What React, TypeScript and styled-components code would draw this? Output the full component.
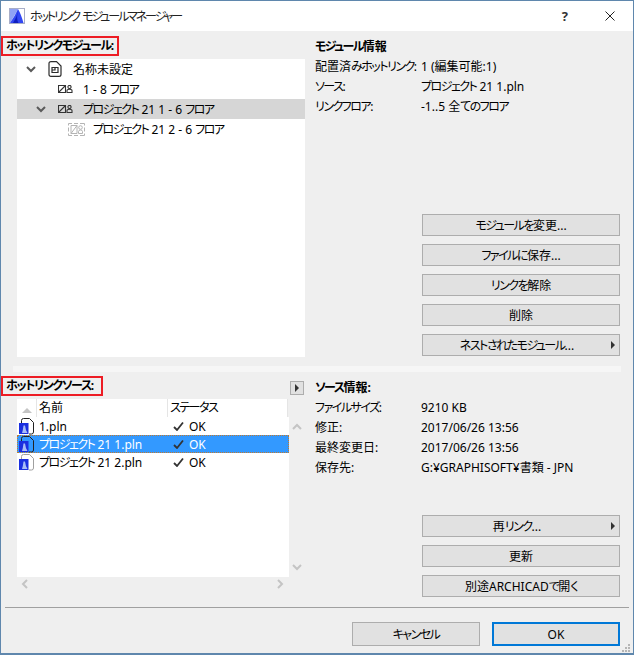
import { Fragment } from 'react'
import styled, { createGlobalStyle } from 'styled-components'

const GlobalStyle = createGlobalStyle`
  html, body {
    margin: 0;
    padding: 0;
    background: #efefef;
  }
  * {
    box-sizing: border-box;
  }
`

const FONT = `"Noto Sans", "Noto Sans CJK JP", sans-serif`

const modules = [
  { name: '名称未設定', level: 0, open: true, icon: 'doc', current: false },
  { name: '1 - 8 フロア', level: 1, open: false, icon: 'module', current: false },
  { name: 'プロジェクト 21 1 - 6 フロア', level: 1, open: true, icon: 'module', current: true },
  { name: 'プロジェクト 21 2 - 6 フロア', level: 2, open: false, icon: 'ghost', current: false },
]

const moduleInfo = [
  { label: '配置済みホットリンク:', value: '1 (編集可能:1)' },
  { label: 'ソース:', value: 'プロジェクト 21 1.pln' },
  { label: 'リンクフロア:', value: '-1..5 全てのフロア' },
]

const sourceInfo = [
  { label: 'ファイルサイズ:', value: '9210 KB' },
  { label: '修正:', value: '2017/06/26 13:56' },
  { label: '最終変更日:', value: '2017/06/26 13:56' },
  { label: '保存先:', value: 'G:¥GRAPHISOFT¥書類 - JPN' },
]

const files = [
  { name: '1.pln', selected: false, faded: false },
  { name: 'プロジェクト 21 1.pln', selected: true, faded: false },
  { name: 'プロジェクト 21 2.pln', selected: false, faded: true },
]

// the original UI font has much narrower kana than Noto, so tighten just those runs
const Jp = ({ children }: { children: string }) => (
  <>
    {children.split(/([\u3040-\u30ff]+)/).map((part, i) =>
      i % 2 === 1 ? <Kana key={i}>{part}</Kana> : <Fragment key={i}>{part}</Fragment>,
    )}
  </>
)

const Chevron = ({ dir, color = '#5a5a5a', size = 10 }: { dir: 'up' | 'down' | 'left' | 'right'; color?: string; size?: number }) => {
  const d = {
    down: 'M1 3 L5 7 L9 3',
    up: 'M1 7 L5 3 L9 7',
    left: 'M7 1 L3 5 L7 9',
    right: 'M3 1 L7 5 L3 9',
  }[dir]
  return (
    <svg width={size} height={size} viewBox='0 0 10 10' fill='none'>
      <path d={d} stroke={color} strokeWidth='2' />
    </svg>
  )
}

const DocIcon = () => (
  <svg width='14' height='16' viewBox='0 0 14 16' fill='none' stroke='#2b2b2b' strokeWidth='1.2'>
    <path d='M1 2.5 Q1 0.6 3 0.6 H8.5 L13 5 V13.5 Q13 15.4 11 15.4 H3 Q1 15.4 1 13.5 Z' />
    <path d='M4 6.5 H10 V11.5 H4 Z M4 9 H7 V6.5' />
  </svg>
)

const ModuleIcon = ({ ghost }: { ghost?: boolean }) =>
  ghost ? (
    <svg width='17' height='13' viewBox='0 0 17 13' fill='none' stroke='#b4b4b4' strokeWidth='1'>
      <path d='M0.5 2.5 V0.5 H4 M6 0.5 H10 M12 0.5 H16.5 V2.5 M16.5 4.5 V8.5 M16.5 10.5 V12.5 H12 M10 12.5 H6 M4 12.5 H0.5 V10.5 M0.5 8.5 V4.5' />
      <path d='M3 2.5 H9 V10.5 H3 Z M3 10.5 L9 2.5' />
      <circle cx='12.5' cy='4.5' r='1.8' />
      <path d='M10.5 10.5 V8.5 Q10.5 7 12.5 7 Q14.5 7 14.5 8.5 V10.5 Z' />
    </svg>
  ) : (
    <svg width='15' height='8' viewBox='0 0 15 8' fill='none' stroke='#333' strokeWidth='1.1'>
      <path d='M0.5 0.5 H7.5 V7.5 H0.5 Z M0.5 7.5 L7.5 0.5' />
      <circle cx='11.5' cy='2' r='1.6' />
      <path d='M9 7.5 V5.5 Q9 4.3 11.5 4.3 Q14 4.3 14 5.5 V7.5 Z' />
    </svg>
  )

const PlanIcon = ({ faded }: { faded?: boolean }) => (
  <svg width='16' height='17' viewBox='0 0 16 17' fill='none'>
    <path
      d='M2.5 5 V2.5 Q2.5 0.5 4.5 0.5 H10.5 L14.5 4.5 V14 Q14.5 16 12.5 16 H10'
      stroke={faded ? '#a0a0a0' : '#222'}
    />
    <rect x='0' y='5' width='9.5' height='11' fill='#1b2fe0' />
    <path d='M3 15 Q4 12 4.5 7.5 H6 Q6.5 12 8.5 15 Z' fill='#a9bdf5' />
  </svg>
)

const AppLogo = () => (
  <svg width='16' height='16' viewBox='0 0 16 16'>
    <rect x='0.5' y='0.5' width='15' height='15' fill='#fff' stroke='#a8aec8' />
    <path d='M1 1 H9 Q6 7 1 15 Z' fill='#8fa2f5' />
    <path d='M1 15 Q6 8 9 1 Q12 6 14.5 15 Z' fill='#3247f2' />
    <path d='M4 15 Q8 9 9 3 Q7 11 9.5 15 Z' fill='#0f1ec0' />
  </svg>
)

const App = () => {
  return (
    <>
      <GlobalStyle />
      <Window>
        <TitleBar>
          <AppLogo />
          <TitleText><Jp>ホットリンク モジュールマネージャー</Jp></TitleText>
          <HelpMark>?</HelpMark>
          <CloseMark viewBox='0 0 10 10'>
            <path d='M0.5 0.5 L9.5 9.5 M9.5 0.5 L0.5 9.5' stroke='#222' fill='none' />
          </CloseMark>
        </TitleBar>

        <UpperPane>
          <Column>
            <SectionLabel $width={118}><Jp>ホットリンクモジュール:</Jp></SectionLabel>
            <Tree>
              {modules.map(m => (
                <TreeRow key={m.name} $level={m.level} $current={m.current}>
                  <TreeToggle>{m.open && <Chevron dir='down' />}</TreeToggle>
                  <TreeIcon>
                    {m.icon === 'doc' && <DocIcon />}
                    {m.icon === 'module' && <ModuleIcon />}
                    {m.icon === 'ghost' && <ModuleIcon ghost />}
                  </TreeIcon>
                  <Jp>{m.name}</Jp>
                </TreeRow>
              ))}
            </Tree>
          </Column>
          <SideColumn>
            <InfoTitle><Jp>モジュール情報</Jp></InfoTitle>
            {moduleInfo.map(i => (
              <InfoRow key={i.label}>
                <span><Jp>{i.label}</Jp></span>
                <span><Jp>{i.value}</Jp></span>
              </InfoRow>
            ))}
            <ButtonStack>
              <ActionButton><Jp>モジュールを変更...</Jp></ActionButton>
              <ActionButton><Jp>ファイルに保存...</Jp></ActionButton>
              <ActionButton><Jp>リンクを解除</Jp></ActionButton>
              <ActionButton>削除</ActionButton>
              <ActionButton>
                <ButtonLabel><Jp>ネストされたモジュール...</Jp></ButtonLabel>
                <MenuArrow />
              </ActionButton>
            </ButtonStack>
          </SideColumn>
        </UpperPane>

        <Splitter />

        <LowerPane>
          <Column>
            <SourceHead>
              <SectionLabel $width={102}><Jp>ホットリンクソース:</Jp></SectionLabel>
              <ToggleButton>
                <MenuArrow />
              </ToggleButton>
            </SourceHead>
            <ListHeader>
              <SortCell>
                <SortArrow />
              </SortCell>
              <HeaderCell $width={131}>名前</HeaderCell>
              <HeaderCell $width={120}><Jp>ステータス</Jp></HeaderCell>
            </ListHeader>
            <ListArea>
              <ListBody>
                {files.map(f => (
                  <FileRow key={f.name} $selected={f.selected}>
                    <PlanIcon faded={f.faded} />
                    <FileName><Jp>{f.name}</Jp></FileName>
                    <StatusMark viewBox='0 0 11 10'>
                      <path d='M1 6 L4 9 L10 1.5' stroke='#333' strokeWidth='1.8' fill='none' />
                    </StatusMark>
                    OK
                  </FileRow>
                ))}
              </ListBody>
              <VScroll>
                <Chevron dir='up' color='#c4c4c4' />
                <Chevron dir='down' color='#c4c4c4' />
              </VScroll>
            </ListArea>
            <HScroll>
              <Chevron dir='left' color='#c4c4c4' />
              <Chevron dir='right' color='#c4c4c4' />
            </HScroll>
          </Column>
          <SideColumn>
            <InfoTitle><Jp>ソース情報:</Jp></InfoTitle>
            {sourceInfo.map(i => (
              <InfoRow key={i.label}>
                <span><Jp>{i.label}</Jp></span>
                <span><Jp>{i.value}</Jp></span>
              </InfoRow>
            ))}
            <ButtonStack>
              <ActionButton>
                <ButtonLabel><Jp>再リンク...</Jp></ButtonLabel>
                <MenuArrow />
              </ActionButton>
              <ActionButton>更新</ActionButton>
              <ActionButton><Jp>別途ARCHICADで開く</Jp></ActionButton>
            </ButtonStack>
          </SideColumn>
        </LowerPane>

        <FooterRule />
        <Footer>
          <DialogButton $width={128}><Jp>キャンセル</Jp></DialogButton>
          <DialogButton $width={128} $primary>OK</DialogButton>
        </Footer>
        <Grip viewBox='0 0 9 8'>
          <path d='M6 0h2v2h-2z M3 3h2v2h-2z M6 3h2v2h-2z M0 6h2v2h-2z M3 6h2v2h-2z M6 6h2v2h-2z' fill='#b5b5b5' />
        </Grip>
      </Window>
    </>
  )
}

export default App

const Kana = styled.span`
  letter-spacing: -1.5px;
`

const Window = styled.div`
  position: relative;
  width: 634px;
  height: 655px;
  display: flex;
  flex-direction: column;
  background: #efefef;
  border: 1px solid #5f87ad;
  border-bottom-width: 2px;
  color: #000;
  font-family: ${FONT};
  font-size: 12px;
  font-feature-settings: 'palt';
  overflow: hidden;
`

const TitleBar = styled.div`
  height: 30px;
  flex-shrink: 0;
  display: flex;
  align-items: center;
  padding: 0 18px 0 8px;
  background: #fff;

  ${Kana} {
    letter-spacing: -2.1px;
  }
`

const TitleText = styled.div`
  flex: 1;
  margin-left: 5px;
  color: #222;
  white-space: pre;
`

const HelpMark = styled.span`
  font-size: 13px;
  font-weight: 700;
  color: #333;
  margin-right: 37px;
`

const CloseMark = styled.svg`
  width: 10px;
  height: 10px;
`

const UpperPane = styled.div`
  height: 335px;
  flex-shrink: 0;
  display: grid;
  grid-template-columns: 304px 1fr;
`

const LowerPane = styled.div`
  height: 235px;
  flex-shrink: 0;
  display: grid;
  grid-template-columns: 304px 1fr;
`

const Column = styled.div`
  display: flex;
  flex-direction: column;
`

const SideColumn = styled.div`
  display: flex;
  flex-direction: column;
  padding: 6px 13px 10px 10px;
`

const SectionLabel = styled.div<{ $width: number }>`
  width: ${p => p.$width}px;
  height: 20px;
  margin-top: 5px;
  padding-left: 3px;
  line-height: 16px;
  font-weight: 700;
  white-space: nowrap;
  border: 2px solid #ed1c24;

  ${Kana} {
    letter-spacing: -1.4px;
  }
`

const Tree = styled.div`
  height: 298px;
  margin: 3px 0 0 16px;
  background: #fff;
`

const TreeRow = styled.div<{ $level: number; $current: boolean }>`
  height: 20px;
  display: flex;
  align-items: center;
  padding-left: ${p => 9 + p.$level * 10}px;
  background: ${p => (p.$current ? '#d6d6d6' : 'transparent')};
  white-space: pre;
`

const TreeToggle = styled.span`
  width: 20px;
  display: flex;
`

const TreeIcon = styled.span`
  width: 27px;
  display: flex;
  align-items: center;
  padding-left: 2px;
`

const InfoTitle = styled.div`
  height: 20px;
  line-height: 20px;
  font-weight: 700;

  ${Kana} {
    letter-spacing: -1.6px;
  }
`

const InfoRow = styled.div`
  height: 20px;
  line-height: 20px;
  display: grid;
  grid-template-columns: 106px 1fr;
  white-space: nowrap;
`

const ButtonStack = styled.div`
  margin: auto 0 0 107px;
  display: flex;
  flex-direction: column;
  gap: 8px;
`

const ActionButton = styled.div`
  height: 22px;
  display: flex;
  align-items: center;
  justify-content: center;
  background: #e1e1e1;
  border: 1px solid #adadad;
  white-space: pre;
`

const ButtonLabel = styled.span`
  flex: 1;
  text-align: center;
`

const MenuArrow = styled.span`
  width: 0;
  height: 0;
  margin-right: 4px;
  border-left: 4px solid #333;
  border-top: 4px solid transparent;
  border-bottom: 4px solid transparent;
`

const Splitter = styled.div`
  height: 6px;
  flex-shrink: 0;
  margin: 0 12px;
  background: #f6f6f6;
`

const SourceHead = styled.div`
  display: flex;
  justify-content: space-between;
  align-items: flex-end;
  margin-top: -1px;
`

const ToggleButton = styled.div`
  width: 14px;
  height: 14px;
  margin: 0 1px 1px 0;
  display: flex;
  align-items: center;
  justify-content: center;
  background: #e1e1e1;
  border: 1px solid #adadad;

  span {
    margin-right: 0;
  }
`

const ListHeader = styled.div`
  width: 271px;
  height: 18px;
  margin: 3px 0 0 16px;
  display: flex;
  background: #fff;
`

const SortCell = styled.div`
  width: 20px;
  display: flex;
  align-items: center;
  justify-content: center;
  border-right: 1px solid #e5e5e5;
`

const SortArrow = styled.span`
  width: 0;
  height: 0;
  margin-top: 4px;
  border-left: 5px solid transparent;
  border-right: 5px solid transparent;
  border-bottom: 5px solid #c4c4c4;
`

const HeaderCell = styled.div<{ $width: number }>`
  width: ${p => p.$width}px;
  padding-left: 2px;
  line-height: 18px;
  border-right: 1px solid #e5e5e5;
`

const ListArea = styled.div`
  display: flex;
  margin-left: 16px;
`

const ListBody = styled.div`
  width: 272px;
  height: 160px;
  background: #fff;
`

const FileRow = styled.div<{ $selected: boolean }>`
  height: 18px;
  display: flex;
  align-items: center;
  padding-left: 2px;
  color: ${p => (p.$selected ? '#fff' : '#000')};
  background: ${p => (p.$selected ? '#3399ff' : 'transparent')};
  outline: ${p => (p.$selected ? '1px dotted #c07a30' : 'none')};
  outline-offset: -1px;
  white-space: nowrap;
`

const FileName = styled.span`
  width: 134px;
  margin-left: 4px;
`

const StatusMark = styled.svg`
  width: 11px;
  height: 10px;
  margin-right: 5px;
`

const VScroll = styled.div`
  width: 16px;
  display: flex;
  flex-direction: column;
  justify-content: space-between;
  align-items: center;
  padding: 5px 0 5px 0;
`

const HScroll = styled.div`
  width: 272px;
  height: 14px;
  margin-left: 16px;
  display: flex;
  justify-content: space-between;
  align-items: center;
  padding: 0 4px 0 3px;
`

const FooterRule = styled.div`
  height: 1px;
  flex-shrink: 0;
  margin: 0 4px;
  background: #a0a0a0;
`

const Footer = styled.div`
  display: flex;
  justify-content: flex-end;
  gap: 12px;
  padding: 14px 13px 0 0;
`

const DialogButton = styled.div<{ $width: number; $primary?: boolean }>`
  width: ${p => p.$width}px;
  height: 24px;
  display: flex;
  align-items: center;
  justify-content: center;
  background: #e1e1e1;
  border: ${p => (p.$primary ? '2px solid #0078d7' : '1px solid #adadad')};
`

const Grip = styled.svg`
  position: absolute;
  right: 2px;
  bottom: 1px;
  width: 9px;
  height: 8px;
`
